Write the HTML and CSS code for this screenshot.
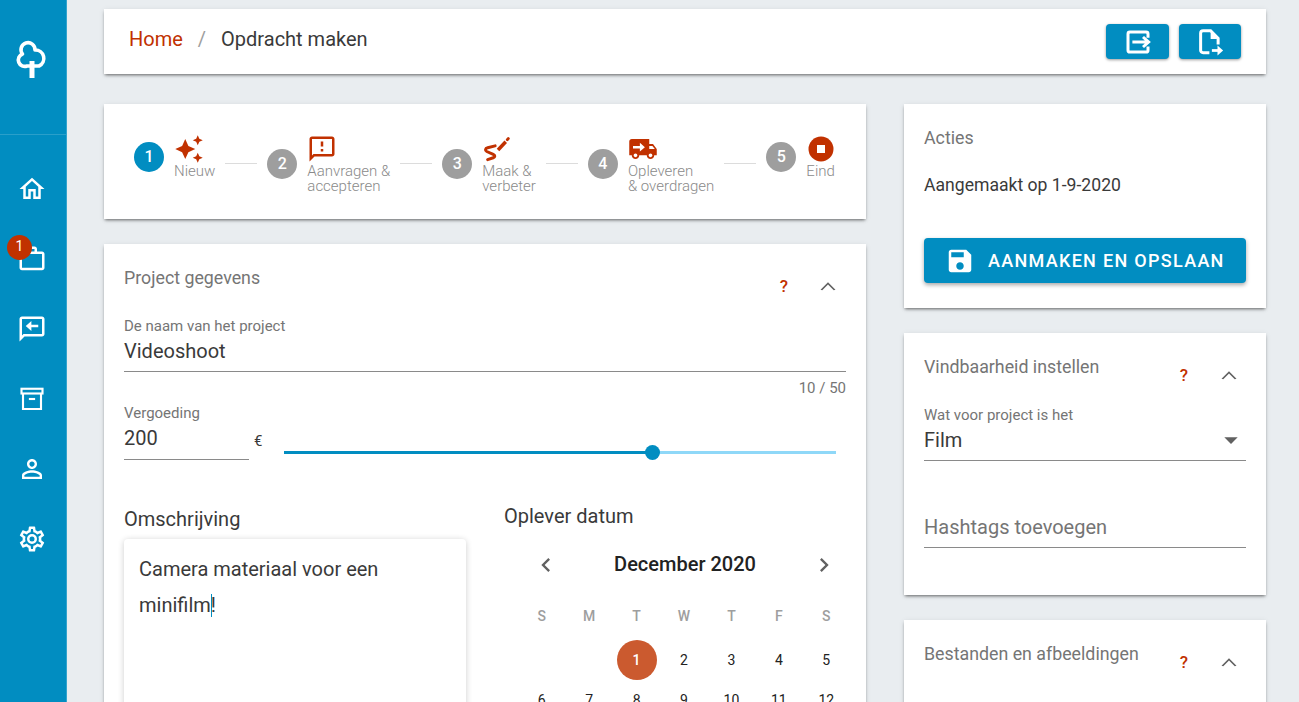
FILE: index.html
```html
<!DOCTYPE html>
<html lang="en">
<head>
    <meta charset="UTF-8">
    <meta name="viewport" content="width=device-width, initial-scale=1.0">
    <title>Opdracht maken</title>
    <link rel="stylesheet" href="styles.css">
</head>
<body>
    <div class="app">
        <aside class="sidebar">
            <div class="logo">
                <svg width="36" height="42" viewBox="0 0 36 42" fill="none" stroke="#fff" stroke-width="3.6" stroke-linejoin="round">
                    <path d="M17 27H12A6.400 6.400 0 0 1 7.500 15A7 7 0 1 1 20 11A8.400 8.400 0 0 1 24 27H17"/>
                    <path d="M17 22V39" stroke-width="5"/>
                </svg>
            </div>
            <nav class="nav">
                <a class="nav-item"><svg class="nav-icon" viewBox="0 0 24 24"><path d="M12 5.69l5 4.500V18h-2v-6H9v6H7v-7.810l5-4.500M12 3L2 12h3v8h6v-6h2v6h6v-8h3L12 3z"/></svg></a>
                <a class="nav-item">
                    <svg class="nav-icon" viewBox="0 0 24 24"><path d="M14 6V4h-4v2h4zM4 8v11h16V8H4zm16-2c1.110 0 2 .89 2 2v11c0 1.110-.89 2-2 2H4c-1.110 0-2-.89-2-2l.01-11c0-1.110.88-2 1.990-2h4V4c0-1.110.89-2 2-2h4c1.110 0 2 .89 2 2v2h4z"/></svg>
                    <span class="badge">1</span>
                </a>
                <a class="nav-item"><svg class="nav-icon" viewBox="0 0 24 24"><path d="M20 2H4c-1.100 0-2 .9-2 2v18l4-4h14c1.100 0 2-.9 2-2V4c0-1.100-.9-2-2-2zm0 14H5.170L4 17.170V4h16v12z"/><path d="M11.500 5.500L7 9.500l4.500 4v-3H17v-2h-5.500z"/></svg></a>
                <a class="nav-item"><svg class="nav-icon nav-icon-line" viewBox="0 0 24 24"><rect x="3.600" y="3.800" width="16.800" height="3.800"/><path d="M4.800 7.600V20h14.400V7.600"/><path d="M9.500 12h5"/></svg></a>
                <a class="nav-item"><svg class="nav-icon" viewBox="0 0 24 24"><path d="M12 5.900c1.160 0 2.100.94 2.100 2.100s-.94 2.100-2.100 2.100S9.900 9.160 9.900 8s.94-2.100 2.100-2.100m0 9c2.970 0 6.100 1.460 6.100 2.100v1.100H5.900V17c0-.64 3.130-2.100 6.100-2.100M12 4C9.790 4 8 5.790 8 8s1.790 4 4 4 4-1.790 4-4-1.790-4-4-4zm0 9c-2.670 0-8 1.340-8 4v3h16v-3c0-2.660-5.330-4-8-4z"/></svg></a>
                <a class="nav-item"><svg class="nav-icon" viewBox="0 0 24 24"><path d="M12,8A4,4 0 0,1 16,12A4,4 0 0,1 12,16A4,4 0 0,1 8,12A4,4 0 0,1 12,8M12,10A2,2 0 0,0 10,12A2,2 0 0,0 12,14A2,2 0 0,0 14,12A2,2 0 0,0 12,10M10,22C9.750,22 9.540,21.820 9.500,21.580L9.130,18.930C8.500,18.680 7.960,18.340 7.440,17.940L4.950,18.950C4.730,19.030 4.460,18.950 4.340,18.730L2.340,15.270C2.210,15.050 2.270,14.780 2.460,14.630L4.570,12.970L4.500,12L4.570,11L2.460,9.370C2.270,9.220 2.210,8.950 2.340,8.730L4.340,5.270C4.460,5.050 4.730,4.960 4.950,5.050L7.440,6.050C7.960,5.660 8.500,5.320 9.130,5.070L9.500,2.420C9.540,2.180 9.750,2 10,2H14C14.250,2 14.460,2.180 14.500,2.420L14.870,5.070C15.500,5.320 16.040,5.660 16.560,6.050L19.050,5.050C19.270,4.960 19.540,5.050 19.660,5.270L21.660,8.730C21.790,8.950 21.730,9.220 21.540,9.370L19.430,11L19.500,12L19.430,13L21.540,14.630C21.730,14.780 21.790,15.050 21.660,15.270L19.660,18.730C19.540,18.950 19.270,19.040 19.050,18.950L16.560,17.950C16.040,18.340 15.500,18.680 14.870,18.930L14.500,21.580C14.460,21.820 14.250,22 14,22H10M11.250,4L10.880,6.610C9.680,6.860 8.620,7.500 7.850,8.390L5.440,7.350L4.690,8.650L6.800,10.200C6.400,11.370 6.400,12.640 6.800,13.800L4.680,15.360L5.430,16.660L7.860,15.620C8.630,16.500 9.680,17.140 10.870,17.380L11.240,20H12.760L13.130,17.390C14.320,17.140 15.370,16.500 16.140,15.620L18.570,16.660L19.320,15.360L17.200,13.810C17.600,12.640 17.600,11.370 17.200,10.200L19.310,8.650L18.560,7.350L16.150,8.390C15.380,7.500 14.320,6.860 13.120,6.620L12.750,4H11.250Z"/></svg></a>
            </nav>
        </aside>

        <main class="content">
            <header class="card topbar">
                <div class="crumbs">
                    <a class="crumb-link">Home</a>
                    <span class="crumb-sep">/</span>
                    <span>Opdracht maken</span>
                </div>
                <div class="top-actions">
                    <button class="top-btn">
                        <svg class="btn-icon" viewBox="0 0 24 24" fill="none" stroke="#fff" stroke-width="2.400"><path d="M20 8.500V5.500C20 4.700 19.500 4 18.500 4H5.500C4.700 4 4 4.700 4 5.500V18.500C4 19.300 4.700 20 5.500 20H18.500C19.500 20 20 19.300 20 18.500V15.500"/><path d="M7.500 12H20M16 8L20.500 12L16 16"/></svg>
                    </button>
                    <button class="top-btn">
                        <svg class="btn-icon" viewBox="0 0 24 24" fill="none" stroke="#fff" stroke-width="2.400"><path d="M11.500 20.500H6.500C5.300 20.500 4.500 19.700 4.500 18.500V5C4.500 3.800 5.300 3 6.500 3H12.500L18.500 9V14"/><path d="M12.500 3.500V9.500H18Z" fill="#fff" stroke="none"/><path d="M13.500 18.800H19" stroke-width="2.200"/><path d="M18 14.800L22.500 18.800L18 22.800Z" fill="#fff" stroke="none"/></svg>
                    </button>
                </div>
            </header>

            <div class="columns">
                <div class="col-left">
                    <section class="card stepper">
                        <div class="step">
                            <span class="step-no active">1</span>
                            <div class="step-body">
                                <svg class="step-icon" viewBox="0 0 24 24"><path d="M19 9l1.250-2.750L23 5l-2.750-1.250L19 1l-1.250 2.750L15 5l2.750 1.250L19 9zm-7.500.5L9 4 6.500 9.500 1 12l5.500 2.500L9 20l2.500-5.500L17 12l-5.500-2.500zM19 15l-1.250 2.750L15 19l2.750 1.250L19 23l1.250-2.750L23 19l-2.750-1.250L19 15z"/></svg>
                                <span class="step-label">Nieuw</span>
                            </div>
                        </div>
                        <span class="step-line"></span>
                        <div class="step">
                            <span class="step-no">2</span>
                            <div class="step-body">
                                <svg class="step-icon" viewBox="0 0 24 24"><path d="M20 2H4c-1.100 0-1.990.9-1.990 2L2 22l4-4h14c1.100 0 2-.9 2-2V4c0-1.100-.9-2-2-2zm0 14H5.170L4 17.170V4h16v12zM11 12h2v2h-2zm0-6h2v4h-2z"/></svg>
                                <span class="step-label">Aanvragen &amp;<br>accepteren</span>
                            </div>
                        </div>
                        <span class="step-line"></span>
                        <div class="step">
                            <span class="step-no">3</span>
                            <div class="step-body">
                                <svg class="step-icon step-icon-line" viewBox="0 0 24 24"><path d="M10.500 9.500L4.500 11C2.500 11.500 2.300 13.200 3.800 14L9 16.300C10.800 17.200 10.500 18.500 9 19L4.500 20.500"/><path d="M12.800 12.800L19 6.200" stroke-width="2.800" stroke-linecap="butt"/><path d="M20.300 4.500L21 3.700"/></svg>
                                <span class="step-label">Maak &amp;<br>verbeter</span>
                            </div>
                        </div>
                        <span class="step-line"></span>
                        <div class="step">
                            <span class="step-no">4</span>
                            <div class="step-body">
                                <svg class="step-icon" viewBox="0 0 24 24"><path d="M20 8h-3V4H3c-1.100 0-2 .9-2 2v11h2c0 1.660 1.340 3 3 3s3-1.340 3-3h6c0 1.660 1.340 3 3 3s3-1.340 3-3h2v-5l-3-4zM6 18.500c-.83 0-1.500-.67-1.500-1.500s.67-1.500 1.500-1.500 1.500.67 1.500 1.500-.67 1.500-1.500 1.500zm13.500-9l1.960 2.500H17V9.500h2.500zm-1.500 9c-.83 0-1.500-.67-1.500-1.500s.67-1.500 1.500-1.500 1.500.67 1.500 1.500-.67 1.500-1.500 1.500z"/><path d="M4 9.500h5.500V7l4 3.500-4 3.500v-2.500H4z" fill="#fff"/></svg>
                                <span class="step-label">Opleveren<br>&amp; overdragen</span>
                            </div>
                        </div>
                        <span class="step-line"></span>
                        <div class="step">
                            <span class="step-no">5</span>
                            <div class="step-body">
                                <svg class="step-icon" viewBox="0 0 24 24"><circle cx="12" cy="12" r="10"/><rect x="8.800" y="8.800" width="6.400" height="6.400" fill="#fff"/></svg>
                                <span class="step-label">Eind</span>
                            </div>
                        </div>
                    </section>

                    <section class="card panel">
                        <div class="panel-head panel-head-wide">
                            <h2 class="panel-title">Project gegevens</h2>
                            <span class="help">?</span>
                            <svg class="chevron" viewBox="0 0 24 24"><path d="M7.410 15.410L12 10.830l4.590 4.580L18 15l-6-6-6 6z"/></svg>
                        </div>
                        <div class="field">
                            <label class="field-label">De naam van het project</label>
                            <div class="field-value">Videoshoot</div>
                        </div>
                        <div class="counter">10 / 50</div>
                        <div class="price-row">
                            <div class="field price-field">
                                <label class="field-label">Vergoeding</label>
                                <div class="field-value price-value">200</div>
                            </div>
                            <span class="euro">€</span>
                            <div class="slider">
                                <span class="slider-fill" style="width: 66.7%"></span>
                                <span class="slider-thumb" style="left: 66.7%"></span>
                            </div>
                        </div>
                        <div class="details">
                            <div class="description">
                                <h3 class="section-title">Omschrijving</h3>
                                <div class="textbox">Camera materiaal voor een minifilm<span class="caret"></span>!</div>
                            </div>
                            <div class="date-picker">
                                <h3 class="section-title">Oplever datum</h3>
                                <div class="calendar">
                                    <div class="cal-head">
                                        <svg class="cal-arrow" viewBox="0 0 24 24"><path d="M15.410 7.410L14 6l-6 6 6 6 1.410-1.410L10.830 12z"/></svg>
                                        <span class="cal-month">December 2020</span>
                                        <svg class="cal-arrow" viewBox="0 0 24 24"><path d="M10 6L8.590 7.410 13.170 12l-4.580 4.590L10 18l6-6z"/></svg>
                                    </div>
                                    <div class="cal-grid cal-week">
                                        <span>S</span><span>M</span><span>T</span><span>W</span><span>T</span><span>F</span><span>S</span>
                                    </div>
                                    <div class="cal-grid cal-days">
                                        <span></span><span></span>
                                        <span><b class="day-selected">1</b></span>
                                        <span>2</span><span>3</span><span>4</span><span>5</span>
                                        <span>6</span><span>7</span><span>8</span><span>9</span><span>10</span><span>11</span><span>12</span>
                                    </div>
                                </div>
                            </div>
                        </div>
                    </section>
                </div>

                <div class="col-right">
                    <section class="card panel actions">
                        <h2 class="panel-title">Acties</h2>
                        <p class="created">Aangemaakt op 1-9-2020</p>
                        <button class="save-btn">
                            <svg class="save-icon" viewBox="0 0 24 24"><path d="M17 3H5c-1.110 0-2 .9-2 2v14c0 1.100.89 2 2 2h14c1.100 0 2-.9 2-2V7l-4-4zm-5 16c-1.660 0-3-1.340-3-3s1.340-3 3-3 3 1.340 3 3-1.340 3-3 3zm3-10H5V5h10v4z"/></svg>
                            <span>AANMAKEN EN OPSLAAN</span>
                        </button>
                    </section>

                    <section class="card panel findable">
                        <div class="panel-head">
                            <h2 class="panel-title">Vindbaarheid instellen</h2>
                            <span class="help">?</span>
                            <svg class="chevron" viewBox="0 0 24 24"><path d="M7.410 15.410L12 10.830l4.590 4.580L18 15l-6-6-6 6z"/></svg>
                        </div>
                        <div class="field">
                            <label class="field-label">Wat voor project is het</label>
                            <div class="field-value select-value">
                                <span>Film</span>
                                <svg class="select-arrow" viewBox="0 0 24 24"><path d="M7 10l5 5 5-5z"/></svg>
                            </div>
                        </div>
                        <div class="field-value placeholder">Hashtags toevoegen</div>
                    </section>

                    <section class="card panel files">
                        <div class="panel-head">
                            <h2 class="panel-title">Bestanden en afbeeldingen</h2>
                            <span class="help">?</span>
                            <svg class="chevron" viewBox="0 0 24 24"><path d="M7.410 15.410L12 10.830l4.590 4.580L18 15l-6-6-6 6z"/></svg>
                        </div>
                    </section>
                </div>
            </div>
        </main>
    </div>
</body>
</html>
```

FILE: styles.css
```css
* {
    box-sizing: border-box;
}
html, body {
    height: 100%;
    margin: 0;
    overflow: hidden;
}
body {
    background: #e9edf0;
    color: #3a3a3a;
    font-family: Roboto, "Liberation Sans", sans-serif;
}
h2, h3, p {
    margin: 0;
    font-weight: 400;
}
button {
    border: 0;
    cursor: pointer;
    font-family: inherit;
}
.app {
    display: flex;
    height: 100%;
}

/* sidebar */
.sidebar {
    width: 67px;
    flex-shrink: 0;
    background: #018dc1;
    border-right: 1px solid #33a4cd;
}
.logo {
    height: 135px;
    padding: 39px 0 0 15px;
    border-bottom: 1px solid #2a9fca;
}
.logo svg {
    display: block;
}
.nav {
    padding: 19px 2px 0 0;
}
.nav-item {
    position: relative;
    display: flex;
    justify-content: center;
    align-items: center;
    height: 70px;
}
.nav-icon {
    width: 30px;
    height: 30px;
    fill: #fff;
}
.nav-icon-line {
    fill: none;
    stroke: #fff;
    stroke-width: 1.7;
}
.badge {
    position: absolute;
    left: 7px;
    top: 11px;
    width: 25px;
    height: 25px;
    border-radius: 50%;
    background: #c13100;
    color: #fff;
    font-size: 14px;
    line-height: 23px;
    text-align: center;
}

/* main */
.content {
    width: 1162px;
    margin-left: 37px;
    padding-top: 9px;
}
.card {
    background: #fff;
    box-shadow: 0 2px 3px -1px rgba(0, 0, 0, .55), 0 1px 6px rgba(0, 0, 0, .08);
}
.topbar {
    display: flex;
    justify-content: space-between;
    align-items: center;
    height: 65px;
    padding: 0 25px;
}
.crumbs {
    display: flex;
    gap: 15px;
    margin-top: -5px;
    font-size: 20px;
}
.crumb-link {
    color: #c13100;
}
.crumb-sep {
    color: #9e9e9e;
}
.top-actions {
    display: flex;
    gap: 10px;
}
.top-btn {
    display: flex;
    justify-content: center;
    align-items: center;
    width: 63px;
    height: 35px;
    padding: 0;
    border-radius: 4px;
    background: #018dc1;
    box-shadow: 0 1px 3px rgba(0, 0, 0, .4);
}
.top-btn + .top-btn {
    width: 62px;
}
.btn-icon {
    width: 30px;
    height: 30px;
}
.columns {
    display: flex;
    gap: 38px;
    margin-top: 30px;
}
.col-left {
    width: 762px;
}
.col-right {
    width: 362px;
}

/* stepper */
.stepper {
    display: flex;
    align-items: flex-start;
    gap: 10px;
    height: 115px;
    padding: 30px 0 0 30px;
}
.step {
    display: flex;
    align-items: center;
    gap: 10px;
}
.step-no {
    width: 30px;
    height: 30px;
    border-radius: 50%;
    background: #9e9e9e;
    color: #fff;
    font-size: 16px;
    font-weight: 500;
    line-height: 30px;
    text-align: center;
}
.step-no.active {
    background: #018dc1;
}
.step-body {
    display: flex;
    flex-direction: column;
    align-items: flex-start;
}
.step-icon {
    width: 30px;
    height: 30px;
    fill: #c13100;
}
.step-icon-line {
    fill: none;
    stroke: #c13100;
    stroke-width: 2.4;
    stroke-linecap: round;
    stroke-linejoin: round;
}
.step-label {
    color: #8a8a8a;
    font-size: 15px;
    font-weight: 300;
    line-height: 15px;
}
.step-line {
    width: 32px;
    height: 1px;
    margin-top: 29px;
    background: #dcdcdc;
}

/* panels */
.panel {
    padding: 22px 20px 25px;
}
.col-left .panel {
    height: 700px;
    margin-top: 25px;
}
.col-right .panel + .panel {
    margin-top: 25px;
}
.files {
    height: 200px;
}
.panel-head {
    display: flex;
    align-items: flex-start;
    height: 32px;
}
.panel-title {
    flex: 1;
    color: #757575;
    font-size: 17.8px;
    line-height: 24px;
}
.help {
    width: 24px;
    margin-top: 8px;
    color: #c13100;
    font-size: 17px;
    font-weight: 500;
    line-height: 24px;
    text-align: center;
}
.chevron {
    flex-shrink: 0;
    width: 30px;
    height: 30px;
    margin: 5px 2px 0 18px;
    fill: #616161;
}
.panel-head-wide .chevron {
    margin: 5px 3px 0 17px;
}
.field {
    margin-top: 20px;
}
.field-label {
    display: block;
    color: #757575;
    font-size: 15px;
    line-height: 16px;
}
.field-value {
    margin-top: 2px;
    padding-bottom: 5px;
    border-bottom: 1px solid #8a8a8a;
    font-size: 20px;
    line-height: 30px;
}
.counter {
    margin-top: 8px;
    color: #757575;
    font-size: 15px;
    line-height: 16px;
    text-align: right;
}

/* price */
.price-row {
    display: flex;
    align-items: flex-end;
    margin-top: 9px;
}
.price-field {
    width: 125px;
    margin-top: 0;
}
.price-value {
    padding-bottom: 6px;
}
.euro {
    width: 35px;
    margin-bottom: 11px;
    padding-left: 5px;
    font-size: 15px;
    line-height: 16px;
}
.slider {
    position: relative;
    width: 552px;
    height: 3px;
    margin-bottom: 6px;
    background: #8fd8f8;
}
.slider-fill {
    display: block;
    height: 100%;
    background: #018dc1;
}
.slider-thumb {
    position: absolute;
    top: -6px;
    width: 15px;
    height: 15px;
    margin-left: -7px;
    border-radius: 50%;
    background: #018dc1;
}

/* omschrijving + datum */
.details {
    display: flex;
    gap: 38px;
    margin-top: 44px;
}
.description {
    flex-shrink: 0;
    width: 342px;
    padding-top: 3px;
}
.date-picker {
    flex-shrink: 0;
    width: 342px;
}
.section-title {
    font-size: 20px;
    line-height: 24px;
}
.textbox {
    height: 300px;
    margin-top: 8px;
    padding: 12px 15px;
    border-radius: 4px;
    box-shadow: 0 1px 6px rgba(0, 0, 0, .2);
    font-size: 20px;
    line-height: 36px;
}
.caret {
    display: inline-block;
    width: 1px;
    height: 23px;
    margin-right: -1px;
    vertical-align: -5px;
    background: #018dc1;
}
.calendar {
    width: 332px;
    margin: 17px 0 0 14px;
}
.cal-head {
    display: flex;
    justify-content: space-between;
    align-items: center;
    height: 40px;
    padding: 0 12px 0 14px;
}
.cal-month {
    margin-top: -2px;
    color: #222;
    font-size: 20px;
    font-weight: 500;
}
.cal-arrow {
    width: 28px;
    height: 28px;
    fill: #616161;
}
.cal-grid {
    display: grid;
    grid-template-columns: repeat(7, 1fr);
    text-align: center;
    font-size: 14px;
}
.cal-week {
    margin-top: 21px;
    color: #9e9e9e;
    font-weight: 500;
    line-height: 20px;
}
.cal-days {
    margin-top: 14px;
    color: #222;
    grid-auto-rows: 40px;
    line-height: 40px;
}
.day-selected {
    display: block;
    width: 40px;
    height: 40px;
    margin: 0 auto;
    border-radius: 50%;
    background: #cb5a2f;
    color: #fff;
    font-weight: 500;
}

/* right column */
.created {
    margin-top: 23px;
    font-size: 17.6px;
    line-height: 24px;
}
.save-btn {
    display: flex;
    align-items: center;
    width: 100%;
    height: 45px;
    margin-top: 41px;
    padding: 0 0 0 21px;
    border-radius: 4px;
    background: #018dc1;
    box-shadow: 0 2px 4px rgba(0, 0, 0, .35);
    color: #fff;
    font-size: 18px;
    font-weight: 500;
    letter-spacing: 1.3px;
}
.save-icon {
    width: 30px;
    height: 30px;
    margin-right: 13px;
    fill: #fff;
}
.findable {
    padding-bottom: 47px;
}
.select-value {
    display: flex;
    justify-content: space-between;
    align-items: center;
}
.select-arrow {
    width: 32px;
    height: 32px;
    margin: -1px -1px -1px 0;
    fill: #616161;
}
.placeholder {
    margin-top: 51px;
    color: #757575;
}
```
